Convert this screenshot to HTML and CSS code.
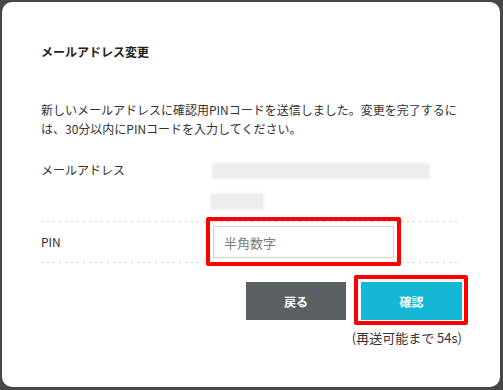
FILE: index.html
```html
<!DOCTYPE html>
<html lang="ja">
<head>
<meta charset="utf-8">
<title>メールアドレス変更</title>
<link rel="stylesheet" href="styles.css">
</head>
<body>
<div class="modal">
  <h1 class="title">メールアドレス変更</h1>
  <p class="message">新しいメールアドレスに確認用PINコードを送信しました。変更を完了するには、30分以内にPINコードを入力してください。</p>
  <div class="field-row field-row--email">
    <div class="label">メールアドレス</div>
    <div class="value">
      <div class="masked masked--long"></div>
      <div class="masked masked--short"></div>
    </div>
  </div>
  <div class="divider"></div>
  <div class="field-row field-row--pin">
    <div class="label">PIN</div>
    <div class="value">
      <div class="highlight-wrap">
        <input class="pin-input" type="text" placeholder="半角数字">
        <span class="highlight highlight--input"></span>
      </div>
    </div>
  </div>
  <div class="divider"></div>
  <div class="actions">
    <button class="btn btn--back" type="button">戻る</button>
    <div class="confirm-col">
      <div class="highlight-wrap">
        <button class="btn btn--confirm" type="button">確認</button>
        <span class="highlight highlight--button"></span>
      </div>
      <div class="resend-note">(再送可能まで 54s)</div>
    </div>
  </div>
</div>
</body>
</html>
```

FILE: styles.css
```css
html, body {
  margin: 0;
  padding: 0;
}
body {
  background: #474747;
  width: 503px;
  height: 390px;
  overflow: hidden;
  font-family: "Noto Sans CJK JP", "Noto Sans", sans-serif;
  font-size: 12px;
  color: #333;
}
.modal {
  box-sizing: border-box;
  margin: 2px 0 0 2px;
  width: 498px;
  height: 385px;
  background: #fff;
  border-radius: 10px;
  padding: 41px 43px 0 39px;
}
.title {
  margin: 0;
  font-size: 12px;
  line-height: 18px;
  font-weight: bold;
  color: #222;
}
.message {
  margin: 39px 0 0;
  line-height: 19px;
  color: #333;
}
.field-row {
  display: grid;
  grid-template-columns: 171px 1fr;
}
.field-row--email {
  margin-top: 23px;
  padding-bottom: 11px;
  align-items: start;
}
.label {
  line-height: 18px;
  color: #333;
}
.masked {
  background: #ededed;
  filter: blur(1.5px);
}
.masked--long {
  margin-top: 2px;
  width: 218px;
  height: 16px;
}
.masked--short {
  margin-top: 14px;
  margin-left: -2px;
  width: 54px;
  height: 17px;
}
.divider {
  height: 1px;
  background-image: repeating-linear-gradient(to right, #d6d6d6 0 2px, transparent 2px 6px);
}
.field-row--pin {
  padding: 4px 0 4px;
  align-items: center;
}
.highlight-wrap {
  position: relative;
  display: inline-block;
  vertical-align: top;
}
.pin-input {
  display: block;
  box-sizing: border-box;
  width: 181px;
  height: 32px;
  margin-left: 1px;
  border: 1px solid #d4d4d4;
  padding: 0 10px;
  font-family: inherit;
  font-size: 13px;
  color: #333;
  background: #fff;
  outline: none;
}
.pin-input::placeholder {
  color: #7a7a7a;
}
.highlight {
  position: absolute;
  border: 4px solid #ff0000;
  border-radius: 2px;
  pointer-events: none;
}
.highlight--input {
  top: -9px;
  bottom: -8px;
  left: -6px;
  right: -7px;
}
.highlight--button {
  top: -7px;
  bottom: -5px;
  left: -7px;
  right: -6px;
}
.actions {
  margin-top: 19px;
  margin-right: -5px;
  display: flex;
  justify-content: flex-end;
  align-items: flex-start;
  gap: 15px;
}
.btn {
  display: block;
  height: 38px;
  border: none;
  border-radius: 0;
  font-family: inherit;
  font-size: 12px;
  font-weight: bold;
  color: #fff;
  padding: 0;
}
.btn--back {
  width: 100px;
  background: #5b6062;
}
.btn--confirm {
  width: 101px;
  background: #15b7d7;
}
.confirm-col {
  width: 101px;
  display: flex;
  flex-direction: column;
  align-items: flex-end;
}
.resend-note {
  margin-top: 9px;
  margin-right: 0;
  font-size: 13px;
  line-height: 18px;
  white-space: nowrap;
  color: #333;
}
```
